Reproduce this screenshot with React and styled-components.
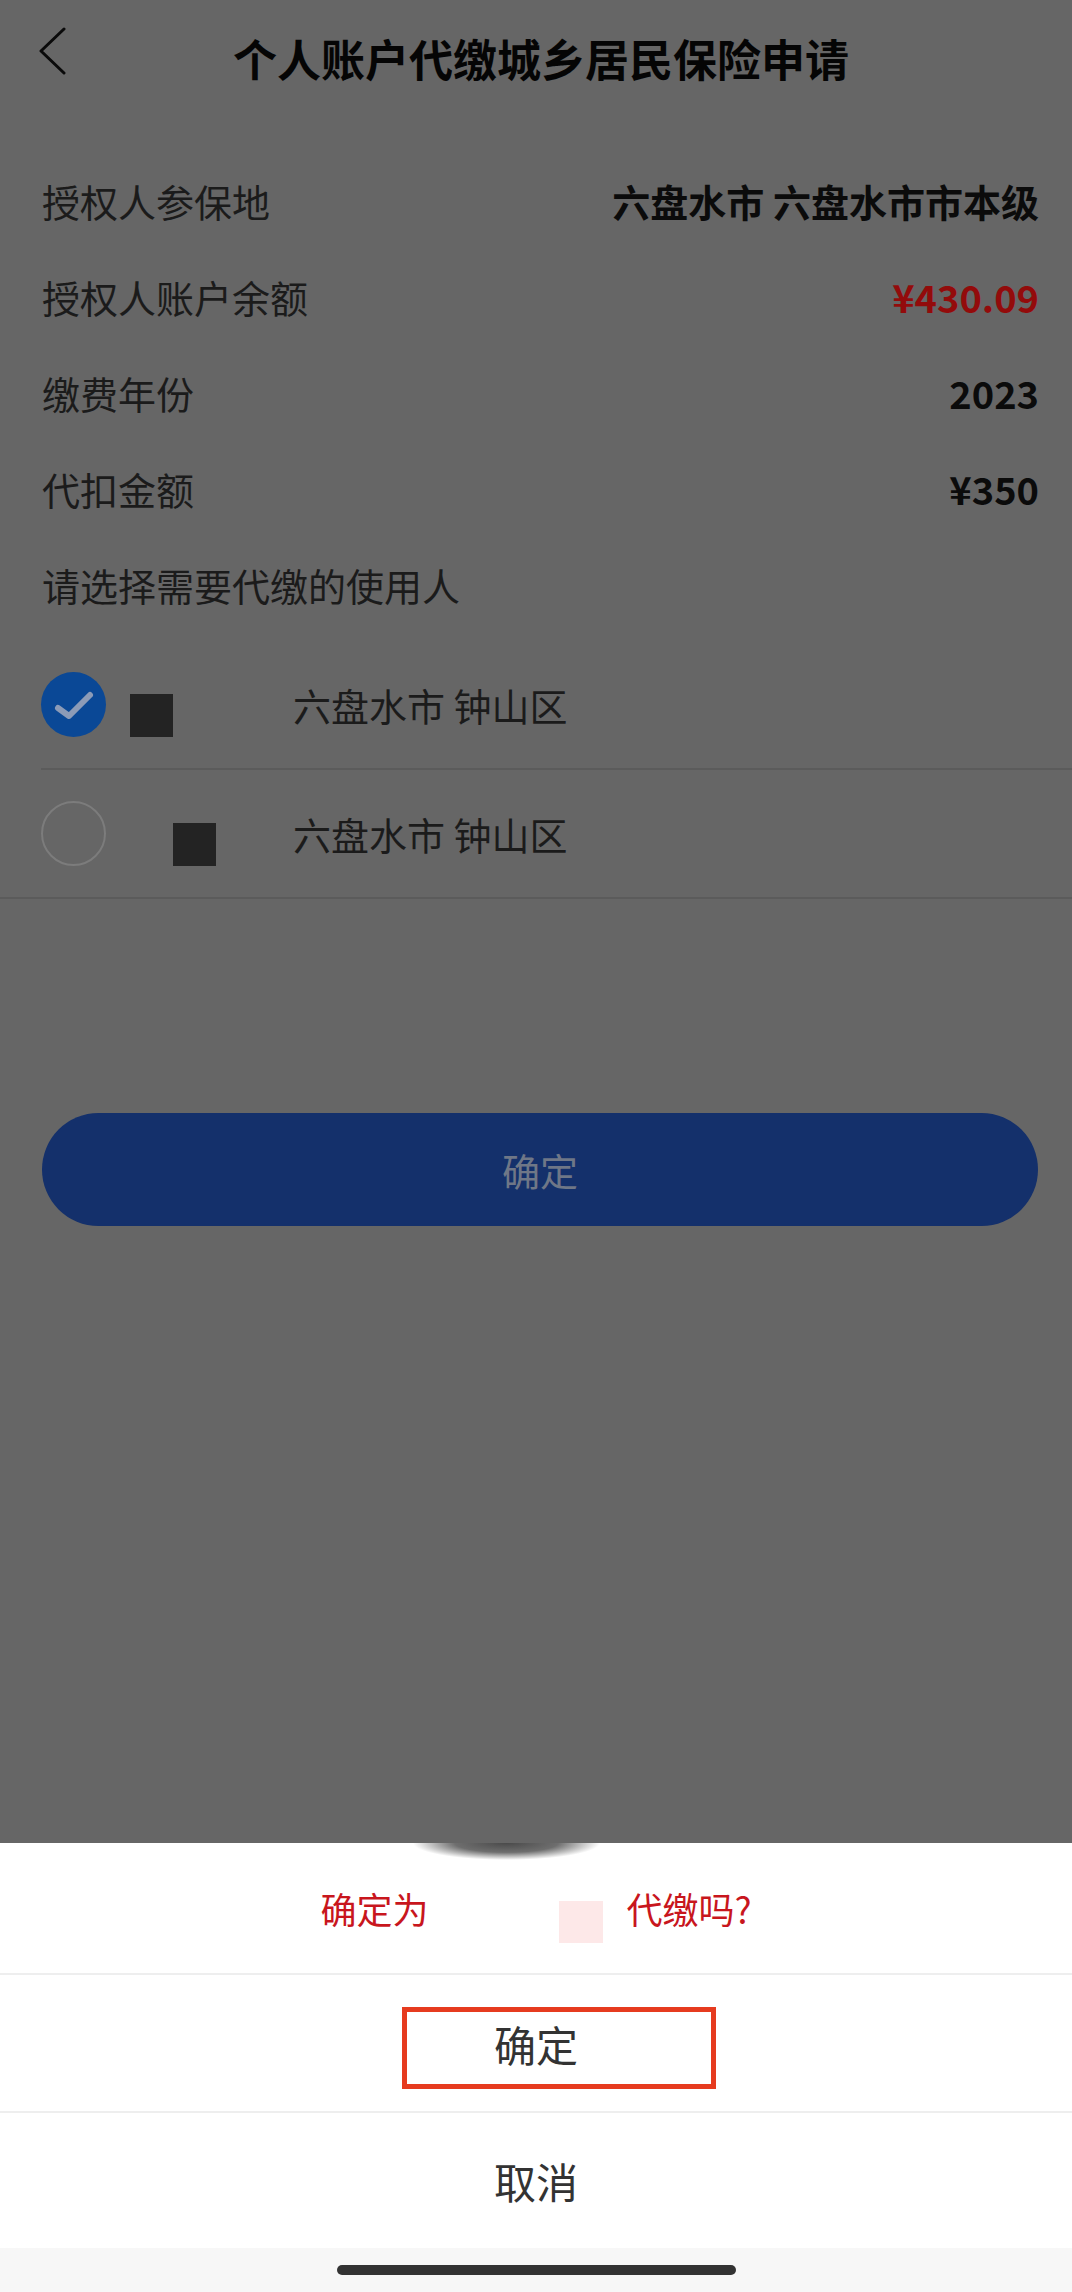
import React, { useState } from "react";
import styled, { createGlobalStyle } from "styled-components";

const GlobalStyle = createGlobalStyle`
  html, body {
    margin: 0;
    padding: 0;
    background-color: #666666;
  }
  body {
    font-family: "Noto Sans CJK SC", "Noto Sans", sans-serif;
  }
`;

const Page = styled.div`
  min-height: 2292px;
  background-color: #666666;
`;

const Header = styled.div`
  display: grid;
  grid-template-columns: 100px 1fr 100px;
  align-items: center;
  height: 116px;
`;

const BackButton = styled.button`
  align-self: start;
  margin-top: 27px;
  padding: 0 0 0 37px;
  border: none;
  background: none;
  text-align: left;
  cursor: pointer;
`;

const Title = styled.h1`
  margin: 0;
  text-align: center;
  font-size: 44px;
  font-weight: 700;
  color: #050505;
  line-height: 1;
  position: relative;
  left: 5px;
`;

const InfoList = styled.div`
  padding-top: 36px;
`;

const InfoRow = styled.div`
  display: flex;
  justify-content: space-between;
  align-items: center;
  height: 96px;
  padding: 0 33px 0 42px;
`;

const Label = styled.span`
  font-size: 38px;
  color: #1b1b1b;
`;

const Value = styled.span`
  font-size: 38px;
  font-weight: 700;
  color: ${(p) => (p.$red ? "#930b0b" : "#0b0b0b")};
`;

const UserList = styled.div`
  margin-top: 9px;
`;

const UserRow = styled.div`
  display: flex;
  align-items: center;
  height: 127px;
  margin-left: ${(p) => (p.$inset ? "41px" : "0")};
  padding-left: ${(p) => (p.$inset ? "0" : "41px")};
  border-bottom: 2px solid #5b5b5b;
  cursor: pointer;
`;

const Radio = styled.span`
  flex-shrink: 0;
  width: 65px;
  height: 65px;
  box-sizing: border-box;
  border-radius: 50%;
  display: flex;
  align-items: center;
  justify-content: center;
  background-color: ${(p) => (p.$checked ? "#0a4896" : "transparent")};
  border: ${(p) => (p.$checked ? "none" : "2px solid #7c7c7c")};
`;

const NameCell = styled.span`
  flex-shrink: 0;
  width: 187px;
  padding-left: ${(p) => p.$offset}px;
  box-sizing: border-box;
  display: flex;
  align-items: center;
`;

const Redacted = styled.span`
  display: block;
  width: 43px;
  height: 43px;
  margin-top: 22px;
  background-color: #232323;
`;

const Address = styled.span`
  font-size: 38px;
  color: #1b1b1b;
`;

const SubmitButton = styled.button`
  display: block;
  width: calc(100% - 76px);
  height: 113px;
  margin: 214px 34px 0 42px;
  border: none;
  border-radius: 57px;
  background-color: #14306b;
  color: #6f7787;
  font-family: inherit;
  font-size: 38px;
`;

const Sheet = styled.div`
  position: fixed;
  left: 0;
  right: 0;
  bottom: 0;
  background-color: #ffffff;
`;

const Message = styled.div`
  position: relative;
  height: 130px;
  display: flex;
  align-items: center;
  justify-content: center;
  font-size: 36px;
  color: #c8161d;
`;

const Smudge = styled.div`
  position: absolute;
  top: 0;
  left: calc(50% - 123px);
  width: 187px;
  height: 17px;
  background: radial-gradient(
    ellipse 50% 100% at 50% 0%,
    #4a4a4a 0%,
    #6e6e6e 55%,
    rgba(255, 255, 255, 0) 100%
  );
`;

const NameMask = styled.span`
  display: inline-flex;
  align-items: flex-start;
  width: 198px;
  height: 42px;
  padding-left: 131px;
  box-sizing: border-box;
`;

const PinkBlock = styled.span`
  display: block;
  width: 44px;
  height: 42px;
  margin-top: 14px;
  background-color: #fde8e8;
`;

const Divider = styled.div`
  height: 2px;
  background-color: #eeeeee;
`;

const Action = styled.div`
  position: relative;
  height: ${(p) => p.$h}px;
  display: flex;
  align-items: center;
  justify-content: center;
  font-size: 42px;
  color: #333333;
  cursor: pointer;
`;

const Highlight = styled.span`
  position: absolute;
  top: 32px;
  left: calc(50% - 134px);
  width: 314px;
  height: 82px;
  box-sizing: border-box;
  border: 5px solid #e63b1f;
`;

const HomeBar = styled.div`
  height: 44px;
  display: flex;
  align-items: center;
  justify-content: center;
  background-color: #f7f7f7;
`;

const Indicator = styled.span`
  width: 399px;
  height: 10px;
  border-radius: 5px;
  background-color: #333333;
`;

const infos = [
  { label: "授权人参保地", value: "六盘水市 六盘水市市本级" },
  { label: "授权人账户余额", value: "¥430.09", red: true },
  { label: "缴费年份", value: "2023" },
  { label: "代扣金额", value: "¥350" },
];

const users = [
  { id: 1, offset: 24, area: "六盘水市 钟山区" },
  { id: 2, offset: 67, area: "六盘水市 钟山区" },
];

const Chevron = () => (
  <svg width="30" height="48" viewBox="0 0 30 48">
    <polyline
      points="27,2 4,24 27,46"
      fill="none"
      stroke="#0a0a0a"
      strokeWidth="3"
      strokeLinecap="round"
      strokeLinejoin="round"
    />
  </svg>
);

const Check = () => (
  <svg width="65" height="65" viewBox="0 0 65 65">
    <polyline
      points="17,36 28,44 49,23"
      fill="none"
      stroke="#8c9bb7"
      strokeWidth="6"
      strokeLinecap="round"
      strokeLinejoin="round"
    />
  </svg>
);

const App = () => {
  const [selected, setSelected] = useState(1);

  return (
    <Page>
      <GlobalStyle />
      <Header>
        <BackButton aria-label="返回">
          <Chevron />
        </BackButton>
        <Title>个人账户代缴城乡居民保险申请</Title>
        <span />
      </Header>

      <InfoList>
        {infos.map((item) => (
          <InfoRow key={item.label}>
            <Label>{item.label}</Label>
            <Value $red={item.red}>{item.value}</Value>
          </InfoRow>
        ))}
        <InfoRow>
          <Label>请选择需要代缴的使用人</Label>
        </InfoRow>
      </InfoList>

      <UserList>
        {users.map((u, i) => (
          <UserRow key={u.id} $inset={i === 0} onClick={() => setSelected(u.id)}>
            <Radio $checked={selected === u.id}>
              {selected === u.id && <Check />}
            </Radio>
            <NameCell $offset={u.offset}>
              <Redacted />
            </NameCell>
            <Address>{u.area}</Address>
          </UserRow>
        ))}
      </UserList>

      <SubmitButton>确定</SubmitButton>

      <Sheet>
        <Message>
          <Smudge />
          <span>确定为</span>
          <NameMask>
            <PinkBlock />
          </NameMask>
          <span>代缴吗?</span>
        </Message>
        <Divider />
        <Action $h={136}>
          确定
          <Highlight />
        </Action>
        <Divider />
        <Action $h={135}>取消</Action>
        <HomeBar>
          <Indicator />
        </HomeBar>
      </Sheet>
    </Page>
  );
};

export default App;
